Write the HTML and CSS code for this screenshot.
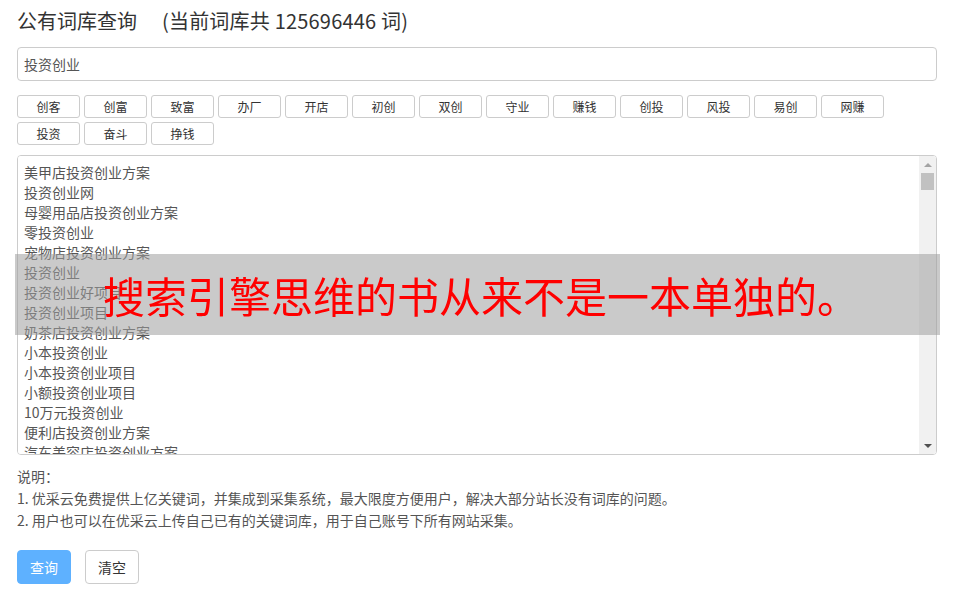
FILE: index.html
```html
<!DOCTYPE html>
<html lang="zh-CN">
<head>
    <meta charset="UTF-8">
    <meta name="viewport" content="width=device-width, initial-scale=1.0">
    <title>公有词库查询</title>
    <link rel="stylesheet" href="styles.css">
</head>
<body>
    <div class="page">
        <h3 class="title">公有词库查询<span class="count">(当前词库共 125696446 词)</span></h3>

        <input class="keyword" type="text" value="投资创业">

        <div class="tags">
            <button class="tag">创客</button>
            <button class="tag">创富</button>
            <button class="tag">致富</button>
            <button class="tag">办厂</button>
            <button class="tag">开店</button>
            <button class="tag">初创</button>
            <button class="tag">双创</button>
            <button class="tag">守业</button>
            <button class="tag">赚钱</button>
            <button class="tag">创投</button>
            <button class="tag">风投</button>
            <button class="tag">易创</button>
            <button class="tag">网赚</button>
            <button class="tag">投资</button>
            <button class="tag">奋斗</button>
            <button class="tag">挣钱</button>
        </div>

        <div class="result-box">
            <textarea class="result" id="result">美甲店投资创业方案
投资创业网
母婴用品店投资创业方案
零投资创业
宠物店投资创业方案
投资创业
投资创业好项目
投资创业项目
奶茶店投资创业方案
小本投资创业
小本投资创业项目
小额投资创业项目
10万元投资创业
便利店投资创业方案
汽车美容店投资创业方案</textarea>
            <div class="scrollbar">
                <span class="arrow arrow-up"></span>
                <span class="thumb"></span>
                <span class="track"></span>
                <span class="arrow arrow-down"></span>
            </div>
        </div>

        <div class="notes">
            <p>说明：</p>
            <p>1. 优采云免费提供上亿关键词，并集成到采集系统，最大限度方便用户，解决大部分站长没有词库的问题。</p>
            <p>2. 用户也可以在优采云上传自己已有的关键词库，用于自己账号下所有网站采集。</p>
        </div>

        <div class="actions">
            <button class="btn btn-primary">查询</button>
            <button class="btn">清空</button>
        </div>
    </div>

    <div class="watermark">搜索引擎思维的书从来不是一本单独的。</div>

    <script>
        const result = document.getElementById('result');
        const shops = ['服装店', '水果店', '花店', '书店', '面包店', '咖啡店', '火锅店', '烧烤店', '干洗店', '文具店',
            '药店', '茶叶店', '酒店', '超市', '早餐店', '快递站', '洗车店', '网吧', '小吃店', '理发店'];
        const tails = ['投资创业方案', '投资创业项目', '投资创业计划', '投资创业指南', '投资创业经验',
            '投资创业风险', '投资创业成本', '投资创业加盟', '投资创业前景', '投资创业利润', '投资创业选址'];

        // fill the list so it scrolls like the real one
        let lines = [];
        tails.forEach(tail => {
            shops.forEach(shop => lines.push(shop + tail));
        });
        result.value += '\n' + lines.join('\n');
    </script>
</body>
</html>
```

FILE: styles.css
```css
* {
    margin: 0;
    padding: 0;
    box-sizing: border-box;
}

body {
    font-family: 'Noto Sans CJK SC', 'Noto Sans', sans-serif;
    color: #555;
    background: #fff;
}

.page {
    padding: 0 17px;
}

.title {
    margin-top: 8px;
    font-size: 20px;
    font-weight: normal;
    line-height: 26px;
    color: #333;
}

.count {
    margin-left: 25px;
    letter-spacing: 0.2px;
}

.keyword {
    display: block;
    width: 100%;
    height: 34px;
    margin-top: 13px;
    padding: 0 6px;
    border: 1px solid #ccc;
    border-radius: 4px;
    font-family: inherit;
    font-size: 14px;
    color: #555;
    outline: none;
}

.tags {
    display: flex;
    flex-wrap: wrap;
    gap: 4px;
    margin-top: 14px;
}

.tag {
    width: 63px;
    height: 23px;
    border: 1px solid #ccc;
    border-radius: 3px;
    background: #fff;
    font-family: inherit;
    font-size: 12px;
    color: #333;
    cursor: pointer;
}

.result-box {
    position: relative;
    margin-top: 10px;
}

.result {
    display: block;
    width: 100%;
    height: 300px;
    padding: 6px 24px 6px 6px;
    border: 1px solid #ccc;
    border-radius: 4px;
    font-family: inherit;
    font-size: 14px;
    line-height: 20px;
    color: #555;
    resize: none;
    outline: none;
    overflow-y: scroll;
}

.scrollbar {
    position: absolute;
    top: 1px;
    right: 1px;
    bottom: 1px;
    width: 17px;
    display: flex;
    flex-direction: column;
    align-items: center;
    background: #f1f1f1;
    border-top-right-radius: 3px;
    border-bottom-right-radius: 3px;
}

.arrow {
    height: 17px;
    width: 17px;
    display: flex;
    align-items: center;
    justify-content: center;
}

.arrow::before {
    content: '';
    border-left: 4px solid transparent;
    border-right: 4px solid transparent;
}

.arrow-up::before {
    border-bottom: 4px solid #a3a3a3;
}

.arrow-down::before {
    border-top: 4px solid #505050;
}

.thumb {
    width: 13px;
    height: 17px;
    background: #c1c1c1;
}

.track {
    flex: 1;
}

.notes {
    margin-top: 10px;
    font-size: 14px;
    line-height: 22px;
    color: #555;
}

.actions {
    display: flex;
    gap: 14px;
    margin-top: 19px;
}

.btn {
    width: 54px;
    height: 34px;
    border: 1px solid #ccc;
    border-radius: 4px;
    background: #fff;
    font-family: inherit;
    font-size: 14px;
    color: #333;
    cursor: pointer;
}

.btn-primary {
    border-color: #5eb1ff;
    background: #5eb1ff;
    color: #fff;
}

.watermark {
    position: absolute;
    left: 15px;
    top: 254px;
    width: 925px;
    height: 81px;
    padding-left: 88px;
    background: rgba(158, 158, 158, 0.55);
    font-size: 42px;
    line-height: 81px;
    color: #ff0000;
    white-space: nowrap;
}
```
